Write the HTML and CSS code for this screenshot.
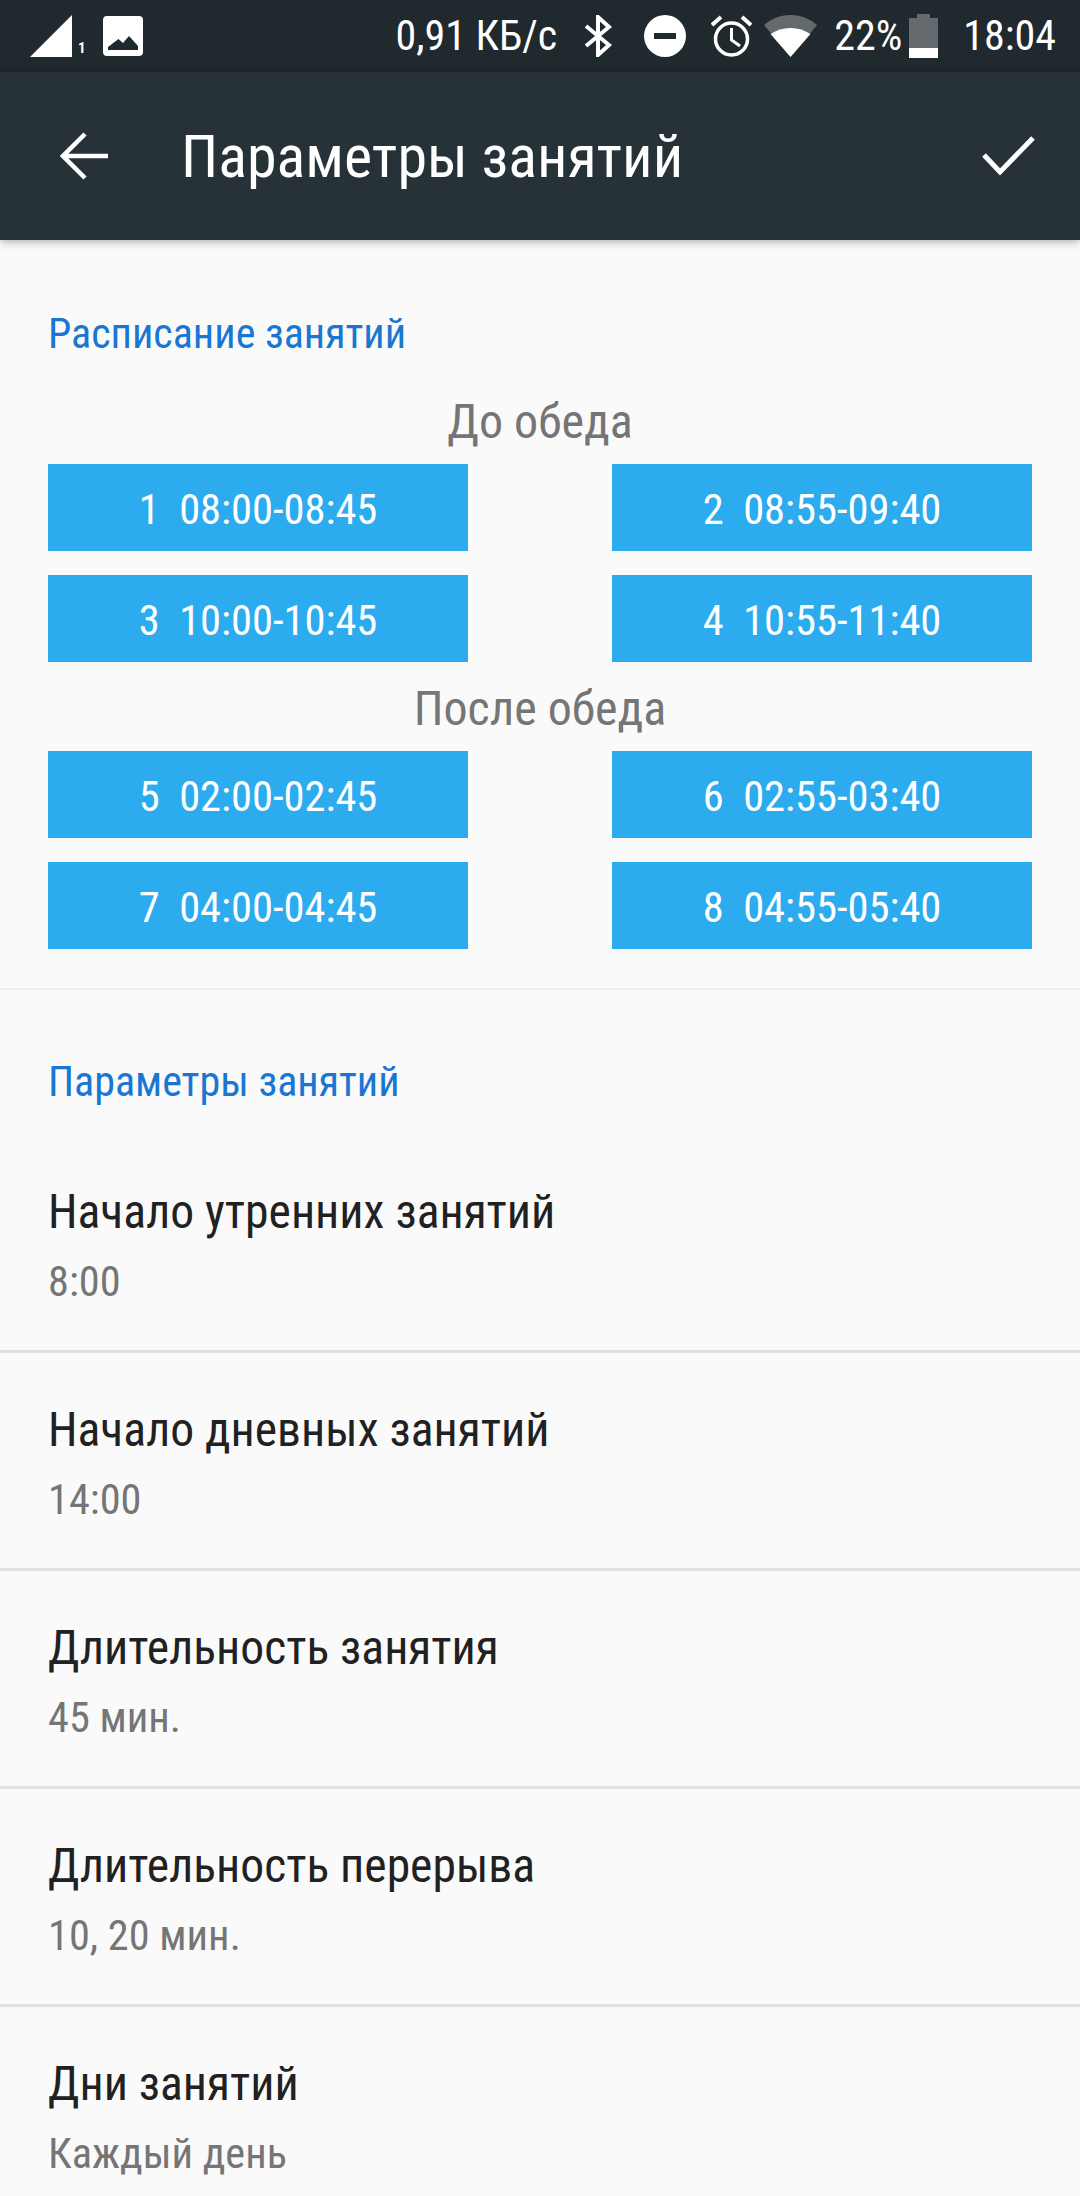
FILE: index.html
```html
<!DOCTYPE html>
<html lang="ru">
<head>
<meta charset="utf-8">
<title>Параметры занятий</title>
<link rel="stylesheet" href="styles.css">
</head>
<body>
<div class="status">
  <div class="status-left">
    <svg class="ic-signal" width="44" height="42" viewBox="0 0 44 42"><path d="M42 0V42H0Z" fill="#fff"/></svg>
    <span class="sim">1</span>
    <svg class="ic-image" width="40" height="40" viewBox="0 0 40 40"><path fill-rule="evenodd" fill="#fff" d="M4 0H36A4 4 0 0 1 40 4V36A4 4 0 0 1 36 40H4A4 4 0 0 1 0 36V4A4 4 0 0 1 4 0ZM5 34H35V30L26 20L20 27L15.500 23L5 31Z"/></svg>
  </div>
  <div class="status-right">
    <span class="speed">0,91 КБ/с</span>
    <svg class="ic-bt" width="27" height="42" viewBox="0 0 27 42"><path fill="none" stroke="#fff" stroke-width="4" d="M1 11L24 30L13 40V2L24 12L1 31"/></svg>
    <svg class="ic-dnd" width="42" height="42" viewBox="0 0 42 42"><path fill-rule="evenodd" fill="#fff" d="M21 0A21 21 0 1 1 21 42A21 21 0 1 1 21 0ZM10 18V24H32V18Z"/></svg>
    <svg class="ic-alarm" width="41" height="42" viewBox="0 0 41 42"><circle cx="20.500" cy="24" r="16" fill="none" stroke="#fff" stroke-width="3.500"/><path d="M20.500 13V25L29 31" fill="none" stroke="#fff" stroke-width="3"/><path d="M1 10L10 2M40 10L31 2" fill="none" stroke="#fff" stroke-width="4"/></svg>
    <svg class="ic-wifi" width="53" height="42" viewBox="0 0 53 42"><path d="M0 10A40 40 0 0 1 53 10L26.500 42Z" fill="#fff" fill-opacity=".3"/><path d="M6.500 19A36 36 0 0 1 46.500 19L26.500 42Z" fill="#fff"/></svg>
    <span class="pct">22%</span>
    <svg class="ic-batt" width="29" height="44" viewBox="0 0 29 44"><path d="M8 0H21V4H29V44H0V4H8Z" fill="#fff" fill-opacity=".3"/><rect y="34" width="29" height="10" fill="#fff"/></svg>
    <span class="clock">18:04</span>
  </div>
</div>
<header class="toolbar">
  <svg class="ic-back" width="48" height="48" viewBox="0 0 48 48"><path d="M48 24H3M25 2L3 24L25 46" fill="none" stroke="#fff" stroke-width="4.500"/></svg>
  <h1 class="title">Параметры занятий</h1>
  <svg class="ic-check" width="53" height="40" viewBox="0 0 53 40"><path d="M2 19L18 36L51 2" fill="none" stroke="#fff" stroke-width="5"/></svg>
</header>
<main class="content">
  <section class="schedule">
    <h2 class="cat cat-first">Расписание занятий</h2>
    <div class="period period-first">До обеда</div>
    <div class="grid">
      <div class="slot">1&nbsp; 08:00-08:45</div>
      <div class="slot">2&nbsp; 08:55-09:40</div>
      <div class="slot">3&nbsp; 10:00-10:45</div>
      <div class="slot">4&nbsp; 10:55-11:40</div>
    </div>
    <div class="period period-second">После обеда</div>
    <div class="grid">
      <div class="slot">5&nbsp; 02:00-02:45</div>
      <div class="slot">6&nbsp; 02:55-03:40</div>
      <div class="slot">7&nbsp; 04:00-04:45</div>
      <div class="slot">8&nbsp; 04:55-05:40</div>
    </div>
  </section>
  <section class="params">
    <h2 class="cat cat-second">Параметры занятий</h2>
    <div class="pref"><div class="pref-title">Начало утренних занятий</div><div class="pref-sub">8:00</div></div>
    <div class="pref"><div class="pref-title">Начало дневных занятий</div><div class="pref-sub">14:00</div></div>
    <div class="pref"><div class="pref-title">Длительность занятия</div><div class="pref-sub">45 мин.</div></div>
    <div class="pref"><div class="pref-title">Длительность перерыва</div><div class="pref-sub">10, 20 мин.</div></div>
    <div class="pref pref-last"><div class="pref-title">Дни занятий</div><div class="pref-sub">Каждый день</div></div>
  </section>
</main>
</body>
</html>
```
FILE: styles.css
```css
* { box-sizing: border-box; }
html, body { margin: 0; padding: 0; }
body {
  width: 1080px; height: 2196px; overflow: hidden;
  background: #fafafa;
  font-family: "Roboto Condensed", Roboto, sans-serif;
  font-stretch: 75%;
}
.status {
  height: 72px; background: #20292d; color: #fff;
  display: flex; justify-content: space-between; align-items: center;
  padding: 0 24px 0 30px; font-size: 42px; line-height: 72px;
}
.status-left, .status-right { display: flex; align-items: center; height: 72px; }
.sim { font-size: 15px; line-height: 15px; font-weight: 700; margin: 24px 0 0 4px; width: 25px; }
.speed { margin-right: 28px; }
.ic-dnd { margin-left: 32px; }
.ic-alarm { margin-left: 25px; }
.ic-wifi { margin-left: 12px; }
.pct { margin-left: 17px; }
.ic-batt { margin-left: 7px; }
.clock { margin-left: 25px; }
.toolbar {
  height: 168px; background: #263238; color: #fff;
  display: flex; align-items: center; padding: 0 45px 0 60px;
  box-shadow: 0 2px 8px rgba(0,0,0,.3);
  position: relative;
}
.title { flex: 1; margin: 0 0 0 73px; font-size: 60px; font-weight: 400; }
.schedule { border-bottom: 2px solid #eee; padding: 0 48px; height: 750px; }
.cat { margin: 0; font-size: 42px; line-height: 46px; font-weight: 400; color: #1976d2; }
.cat-first { padding-top: 71px; }
.cat-second { padding: 69px 48px 0; margin-bottom: 30px; }
.period { text-align: center; font-size: 48px; line-height: 56px; color: #757575; }
.period-first { margin-top: 37px; }
.period-second { margin-top: 19px; }
.grid { display: grid; grid-template-columns: 420px 420px; justify-content: space-between; gap: 24px 0; margin-top: 14px; }
.slot {
  height: 87px; background: #2cacef; color: #fff;
  display: flex; align-items: center; justify-content: center;
  padding-top: 3px;
  font-size: 42.500px;
}
.pref { height: 218px; border-bottom: 3px solid #e0e0e0; padding: 49px 48px 0; }
.pref-last { border-bottom: 0; }
.pref-title { font-size: 47.600px; line-height: 56px; color: #212121; }
.pref-sub { font-size: 42.300px; line-height: 52px; color: #757575; margin-top: 16px; }
```
